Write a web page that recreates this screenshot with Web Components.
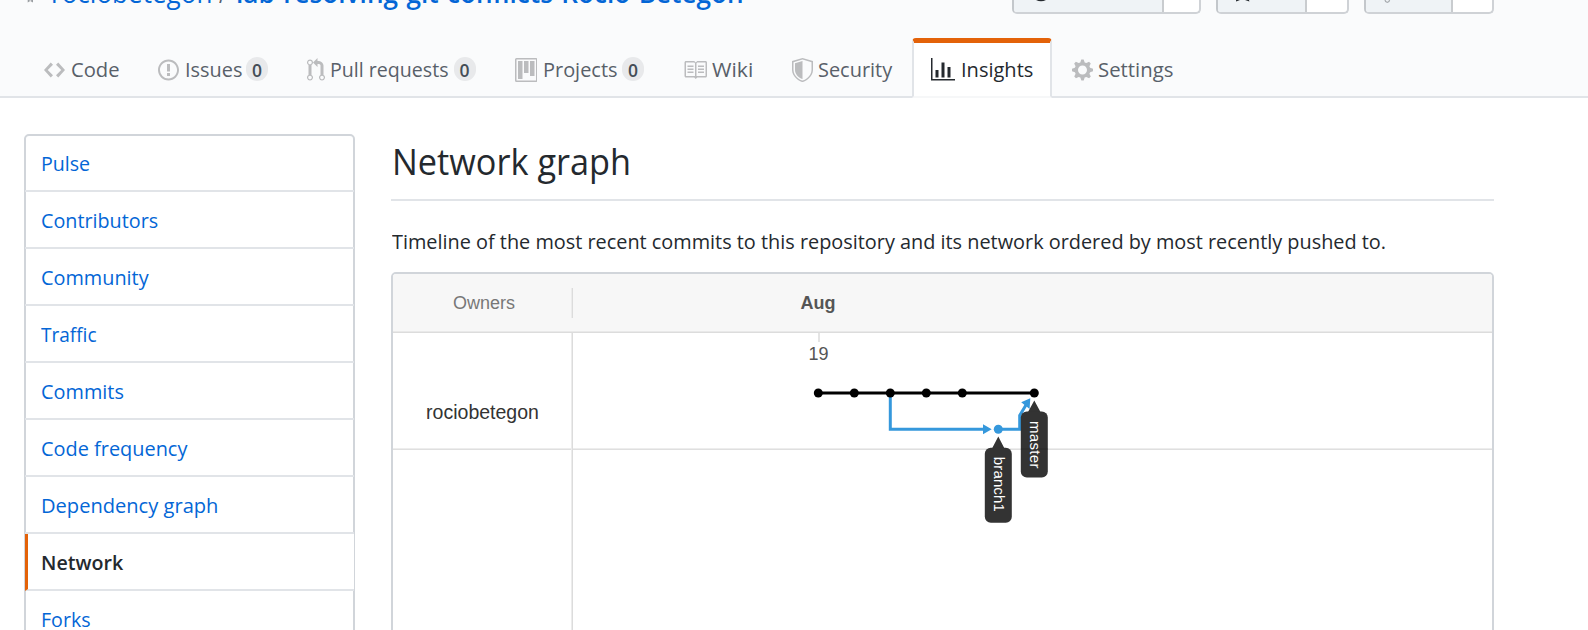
<!DOCTYPE html>
<html lang="en">
<head>
<meta charset="utf-8">
<title>Network graph</title>
<style>
html,body{margin:0;height:100%;overflow:hidden;background:#fff;color:#24292e;font-family:"Open Sans","Noto Sans",sans-serif;font-size:20.6px}
</style>
</head>
<body>
<network-page></network-page>
<script>
const define=(name,html,ready)=>{
  const t=document.createElement('template');t.innerHTML=html;
  customElements.define(name,class extends HTMLElement{
    connectedCallback(){
      if(this.shadowRoot)return;
      this.attachShadow({mode:'open'}).append(t.content.cloneNode(true));
      if(ready)ready(this,this.shadowRoot);
    }
  });
};

/* A single line of text condensed to a given width. */
define('fit-text',`<style>
:host{display:block;white-space:nowrap;line-height:32px;flex:none}
span{display:inline-block;transform-origin:0 50%}
</style><span><slot></slot></span>`,(el,root)=>{
  const s=root.querySelector('span'),w=+el.getAttribute('width');
  el.style.width=w+'px';
  s.style.transform='scaleX('+(w/s.offsetWidth)+')';
});

const ICONS={
code:[14,'M9.5 3L8 4.5 11.5 8 8 11.5 9.5 13 14 8 9.5 3zm-5 0L0 8l4.5 5L6 11.5 2.5 8 6 4.5 4.5 3z'],
issue:[14,'M7 2.3c3.14 0 5.7 2.56 5.7 5.7s-2.56 5.7-5.7 5.7A5.71 5.71 0 0 1 1.3 8c0-3.14 2.56-5.7 5.7-5.7zM7 1C3.14 1 0 4.14 0 8s3.14 7 7 7 7-3.14 7-7-3.14-7-7-7zm1 3H6v5h2V4zm0 6H6v2h2v-2z'],
pull:[12,'M11 11.28V5c-.03-.78-.34-1.47-.94-2.06C9.46 2.35 8.78 2.03 8 2H7V0L4 3l3 3V4h1c.27.02.48.11.69.31.21.2.3.42.31.69v6.28A1.993 1.993 0 0 0 10 15a1.993 1.993 0 0 0 1-3.72zm-1 2.92c-.66 0-1.2-.55-1.2-1.2 0-.65.55-1.2 1.2-1.2.65 0 1.2.55 1.2 1.2 0 .65-.55 1.2-1.2 1.2zM4 3c0-1.11-.89-2-2-2a1.993 1.993 0 0 0-1 3.72v6.56A1.993 1.993 0 0 0 2 15a1.993 1.993 0 0 0 1-3.72V4.72c.59-.34 1-.98 1-1.72zm-.8 10c0 .66-.55 1.2-1.2 1.2-.65 0-1.2-.55-1.2-1.2 0-.65.55-1.2 1.2-1.2.65 0 1.2.55 1.2 1.2zM2 4.2C1.34 4.2.8 3.65.8 3c0-.65.55-1.2 1.2-1.2.65 0 1.2.55 1.2 1.2 0 .65-.55 1.2-1.2 1.2z'],
project:[15,'M10 12h3V2h-3v10zm-4-2h3V2H6v8zm-4 4h3V2H2v12zm-1 1h13V1H1v14zM14 0H1a1 1 0 0 0-1 1v14a1 1 0 0 0 1 1h13a1 1 0 0 0 1-1V1a1 1 0 0 0-1-1z'],
book:[16,'M3 5h4v1H3V5zm0 3h4V7H3v1zm0 2h4V9H3v1zm11-5h-4v1h4V5zm0 2h-4v1h4V7zm0 2h-4v1h4V9zm2-6v9c0 .55-.45 1-1 1H9.5l-1 1-1-1H2c-.55 0-1-.45-1-1V3c0-.55.45-1 1-1h5.5l1 1 1-1H15c.55 0 1 .45 1 1zm-8 .5L7.5 3H2v9h6V3.5zm7-.5H9.5l-.5.5V12h6V3z'],
shield:[14,'M0 2l7-2 7 2v6.02C14 12.69 8.69 16 7 16c-1.69 0-7-3.31-7-7.98V2zm1 .75L7 1l6 1.75v5.268C13 12.104 8.449 15 7 15c-1.449 0-6-2.896-6-6.982V2.75zm1 .75L7 2v12c-1.207 0-5-2.482-5-5.985V3.5z'],
graph:[16,'M16 14v1H0V0h1v14h15zM5 13H3V8h2v5zm4 0H7V3h2v10zm4 0h-2V6h2v7z'],
gear:[14,'M14 8.77v-1.6l-1.94-.64-.45-1.09.88-1.84-1.13-1.13-1.81.91-1.09-.45-.69-1.92h-1.6l-.63 1.94-1.11.45-1.84-.88-1.13 1.13.91 1.81-.45 1.09L0 7.23v1.59l1.94.64.45 1.09-.88 1.84 1.13 1.13 1.81-.91 1.09.45.69 1.92h1.59l.63-1.94 1.11-.45 1.84.88 1.13-1.13-.92-1.81.47-1.09L14 8.75v.02zM7 11c-1.66 0-3-1.34-3-3s1.34-3 3-3 3 1.34 3 3-1.34 3-3 3z']
};
define('oct-icon',`<style>:host{display:block;flex:none;height:24px}svg{display:block}</style><svg height="24" fill="currentColor"><path fill-rule="evenodd"/></svg>`,(el,root)=>{
  const [w,d]=ICONS[el.getAttribute('name')],svg=root.querySelector('svg');
  svg.setAttribute('viewBox','0 0 '+w+' 16');
  svg.setAttribute('width',w*1.5);
  svg.firstChild.setAttribute('d',d);
});

define('nav-tab',`<style>
:host{display:flex;box-sizing:border-box;height:60px;padding:0 0 0 20px;align-items:center;color:#586069;--icon:#bbbcbe}
:host([selected]){background:#fff;color:#24292e;--icon:#24292e;border:2px solid #e1e4e8;border-top:5px solid #e36209;border-bottom:2px solid #f6f7f8;border-radius:4px 4px 0 0;margin-left:-1px;padding:0 0 0 17px}
oct-icon{color:var(--icon);margin-top:4px;margin-right:5.5px}
:host([selected]) oct-icon{margin-top:1px;margin-right:6px}
fit-text{margin-top:2px}
:host([selected]) fit-text{margin-top:-1px}
b{display:none}
:host([count]) b{display:block;margin:1px 0 0 4.5px;width:22px;height:24px;border-radius:12px;background:#e8e9eb;color:#444d56;font:600 17.5px/27px "Open Sans",sans-serif;text-align:center}
</style>`,(el,root)=>{
  const add=(tag,attr,value,text='')=>{
    const n=document.createElement(tag);
    if(attr)n.setAttribute(attr,value);
    n.textContent=text;root.append(n);
  };
  add('oct-icon','name',el.getAttribute('icon'));
  add('fit-text','width',el.getAttribute('w'),el.getAttribute('label'));
  if(el.hasAttribute('count'))add('b','','',el.getAttribute('count'));
});
define('repo-tabs',`<style>
:host{display:grid;grid-template-columns:114px 148.6px 208.4px 168px 109px 141px 139px 140px;margin-left:24px;height:60px}
</style><slot></slot>`);

define('action-button',`<style>
:host{display:flex;height:14px;box-sizing:border-box;border:2px solid #cfd2d6;border-top:0;border-left-color:#c3c7cb;border-radius:0 0 5px 5px;background:#fff;overflow:hidden}
div{box-sizing:border-box;background:#eff3f6;border-right:2px solid #c9cccf;overflow:hidden}
</style><div><slot></slot></div>`,(el,root)=>{
  el.style.width=el.getAttribute('w')+'px';
  root.querySelector('div').style.width=el.getAttribute('main')+'px';
});

define('repo-header',`<style>
:host{display:flex;flex-direction:column;height:98px;box-sizing:border-box;background:#fafbfc;border-bottom:2px solid #e1e4e8}
.top{display:flex;height:38px}
.title{display:flex;width:1012px;height:38px;font-size:26.4px;color:#0366d6}
.title svg{margin-left:27px;width:7px;height:3px}
.title fit-text{margin-top:-23.5px}
.first{margin-left:17px}
.slash{color:#586069;margin-left:7px}
.name{font-weight:600;margin-left:9px}
.actions{display:flex;align-items:flex-start;gap:15px}
svg{display:block}
</style>
<div class="top"><div class="title"><svg viewBox="0 0 7 3"><path d="M.7 0V2.6L3.2 1 6 2.6V0H4.8L3.2.7 2 0z" fill="#999da1"/></svg>
<fit-text class="first" width="161">rociobetegon</fit-text><fit-text class="slash" width="8">/</fit-text><fit-text class="name" width="508">lab-resolving-git-conflicts-Rocio-Betegon</fit-text></div>
<div class="actions">
<action-button w="189" main="149.500"><svg width="60" height="4"><path d="M22 0h10q-5 2.6-10 0" fill="#24292e"/></svg></action-button>
<action-button w="133" main="89"><svg width="60" height="4"><path d="M18 0h4l-3.800 1.600zM27 0h4l.4 1.600z" fill="#24292e"/></svg></action-button>
<action-button w="130" main="87"><svg width="60" height="4"><path d="M19 0q.5 2.300 2.300 2.300T23.600 0" fill="none" stroke="#a5a9ad" stroke-width="1.200"/></svg></action-button>
</div></div>
<repo-tabs>
<nav-tab icon="code" label="Code" w="49"></nav-tab>
<nav-tab icon="issue" label="Issues" w="57" count="0"></nav-tab>
<nav-tab icon="pull" label="Pull requests" w="119" count="0"></nav-tab>
<nav-tab icon="project" label="Projects" w="74.500" count="0"></nav-tab>
<nav-tab icon="book" label="Wiki" w="41"></nav-tab>
<nav-tab icon="shield" label="Security" w="74.500"></nav-tab>
<nav-tab icon="graph" label="Insights" w="72" selected></nav-tab>
<nav-tab icon="gear" label="Settings" w="75"></nav-tab>
</repo-tabs>`);

define('menu-item',`<style>
:host{display:flex;box-sizing:border-box;height:57px;margin:0 -1px;padding:12px 0 0 15.5px;border-bottom:2px solid #e1e4e8;color:#0366d6}
:host([selected]){background:#fff;color:#24292e;font-weight:600;border-left:3px solid #e36209;padding-left:12.5px}
</style><slot></slot>`);
define('side-menu',`<style>
:host{display:block;box-sizing:border-box;width:331px;height:540px;border:2px solid #d1d5da;border-radius:5px}
menu-item:first-of-type{height:56px;padding-top:11px}
</style>
<menu-item><fit-text width="49.500">Pulse</fit-text></menu-item>
<menu-item><fit-text width="117">Contributors</fit-text></menu-item>
<menu-item><fit-text width="108">Community</fit-text></menu-item>
<menu-item><fit-text width="55.500">Traffic</fit-text></menu-item>
<menu-item><fit-text width="83">Commits</fit-text></menu-item>
<menu-item><fit-text width="146">Code frequency</fit-text></menu-item>
<menu-item><fit-text width="177.500">Dependency graph</fit-text></menu-item>
<menu-item selected><fit-text width="82">Network</fit-text></menu-item>
<menu-item><fit-text width="49.500">Forks</fit-text></menu-item>`);

define('commit-plot',`<style>
:host{display:block}svg{display:block}text{font-family:"Liberation Sans",Arial,sans-serif}
</style>
<svg width="919" height="300" viewBox="573 333 919 300">
<rect x="818" y="333" width="2" height="9" fill="#e4e4e4"/>
<text x="818.500" y="360.300" font-size="18" fill="#555" text-anchor="middle">19</text>
<rect x="573" y="448" width="919" height="1" fill="#ededed"/><rect x="573" y="449" width="919" height="1" fill="#dfdfdf"/>
<g fill="none" stroke="#3598dc" stroke-width="3"><path d="M890.300 393V429.200H985M998.300 429.200H1019.700V415.500L1026 405"/></g>
<g fill="#3598dc"><path d="M983 424.200V434.200L991.700 429.200zM1030.300 398.300L1021.200 402.300 1029.600 409z"/><circle cx="998.300" cy="429.200" r="4.500"/></g>
<path d="M818.300 393H1034.300" stroke="#000" stroke-width="3"/>
<g><circle cx="818.300" cy="393" r="4.500"/><circle cx="854.300" cy="393" r="4.500"/><circle cx="890.300" cy="393" r="4.500"/><circle cx="926.300" cy="393" r="4.500"/><circle cx="962.300" cy="393" r="4.500"/><circle cx="1034.300" cy="393" r="4.500"/></g>
<g fill="#333"><path d="M1034.300 400.500L1040.500 412H1028zM998.300 436.500L1004.500 448.500H992z"/><rect x="1020.800" y="411.500" width="27" height="66" rx="6"/><rect x="984.800" y="447.800" width="27" height="75" rx="6"/></g>
<path d="M1021 449H1047.500" stroke="#2b2b2b" stroke-width="1"/>
<g fill="#fff" font-size="15"><text transform="translate(1029.500 421) rotate(90)" textLength="47.500">master</text><text transform="translate(993.800 456.800) rotate(90)" textLength="55">branch1</text></g>
</svg>`);

define('network-graph',`<style>
:host{display:grid;grid-template-columns:180px 1fr;grid-template-rows:59px 117px 1fr;box-sizing:border-box;height:420px;border:2px solid #d1d5da;border-radius:5px;overflow:hidden;font-family:"Liberation Sans",Arial,sans-serif;font-size:18px}
header{grid-column:1/3;display:grid;grid-template-columns:178px 2px 1fr;background:#f7f7f7;border-bottom:1px solid #dcdcdc;box-shadow:inset 0 -1px #e9e9e9;line-height:20px}
.o{color:#777;text-align:center;padding:18.500px 0 0 4px}
i{height:30px;margin-top:14px;background:linear-gradient(90deg,#ececec 50%,#dcdcdc 50%)}
b{color:#555;padding:19px 0 0 227.500px}
.owner,.rest{border-right:1px solid #dcdcdc;box-shadow:inset -1px 0 #ececec}
.owner{color:#333;font-size:19.500px;line-height:22px;padding-top:68px;text-align:center;background:linear-gradient(#ededed,#ededed) 0 115px/100% 1px no-repeat,linear-gradient(#dfdfdf,#dfdfdf) 0 116px/100% 1px no-repeat;box-sizing:border-box}
.rest{grid-column:1;grid-row:3}
commit-plot{grid-column:2;grid-row:2/4}
</style>
<header><span class="o">Owners</span><i></i><b>Aug</b></header>
<div class="owner">rociobetegon</div><div class="rest"></div><commit-plot></commit-plot>`);

define('network-page',`<style>
:host{display:block;height:630px;overflow:hidden}
main{display:flex;gap:36px;padding:36px 94px 0 24px}
side-menu{flex:none}
section{flex:1;min-width:0}
.h{display:flex;box-sizing:border-box;height:67px;border-bottom:2px solid #e1e4e8;font-size:36px}
.h fit-text{margin:12px 0 0 .5px}
.p{height:32px;margin:24px 0 15px .5px}
</style>
<repo-header></repo-header>
<main><side-menu></side-menu><section>
<div class="h"><fit-text width="239">Network graph</fit-text></div>
<div class="p"><fit-text width="994.500">Timeline of the most recent commits to this repository and its network ordered by most recently pushed to.</fit-text></div>
<network-graph></network-graph>
</section></main>`);
</script>
</body>
</html>
